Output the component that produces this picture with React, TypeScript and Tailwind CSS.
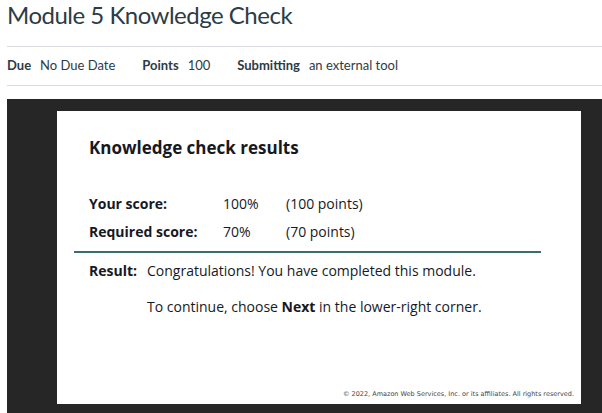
export default function App() {
  return (
    <div className="w-[602px] h-[413px] overflow-hidden bg-white font-['Lato',sans-serif] text-[#2d3b45]">
      <div className="pl-[7px] pr-0">
        <h1 className="text-[24px] leading-[29px] font-normal text-[#2d3b45] tracking-[-0.5px]">Module 5 Knowledge Check</h1>
        <div className="mt-[17px] border-t border-[#d7dbdf]" />
        <div className="h-[38px] flex items-center text-[13px] text-[#2d3b45]">
          <span className="font-bold">Due</span>
          <span className="ml-[9px]">No Due Date</span>
          <span className="ml-[27px] font-bold">Points</span>
          <span className="ml-[9px]">100</span>
          <span className="ml-[27px] font-bold">Submitting</span>
          <span className="ml-[9px]">an external tool</span>
        </div>
        <div className="border-t border-[#d7dbdf]" />
        <div className="mt-[13px] w-[596px] h-[320px] bg-[#262626] pt-[12px] pl-[50px]">
          <div className="w-[524px] h-[293px] bg-white relative font-['Open_Sans',sans-serif] text-[#16191f]">
            <div className="pl-[32px] pt-[26px] text-[17px] leading-[22px] font-bold">Knowledge check results</div>
            <div className="mt-[31px] pl-[32px] text-[14px] leading-[28px]">
              <div className="flex">
                <span className="w-[134px] font-bold">Your score:</span>
                <span className="w-[63px]">100%</span>
                <span>(100 points)</span>
              </div>
              <div className="flex">
                <span className="w-[134px] font-bold">Required score:</span>
                <span className="w-[63px]">70%</span>
                <span>(70 points)</span>
              </div>
            </div>
            <div className="ml-[17px] mt-[5px] w-[467px] h-[2px] bg-[#3b6d70]" />
            <div className="pl-[32px] mt-[8px] text-[14px] leading-[20px] flex">
              <span className="w-[58px] font-bold">Result:</span>
              <span>Congratulations! You have completed this module.</span>
            </div>
            <div className="pl-[90px] mt-[16px] text-[14px] leading-[20px]">
              To continue, choose <span className="font-bold">Next</span> in the lower-right corner.
            </div>
            <div className="absolute right-[7px] bottom-[5px] text-[6.5px] leading-[10px] text-[#444] font-['DejaVu_Sans',sans-serif]">
              © 2022, Amazon Web Services, Inc. or its affiliates. All rights reserved.
            </div>
          </div>
        </div>
      </div>
    </div>
  );
}
